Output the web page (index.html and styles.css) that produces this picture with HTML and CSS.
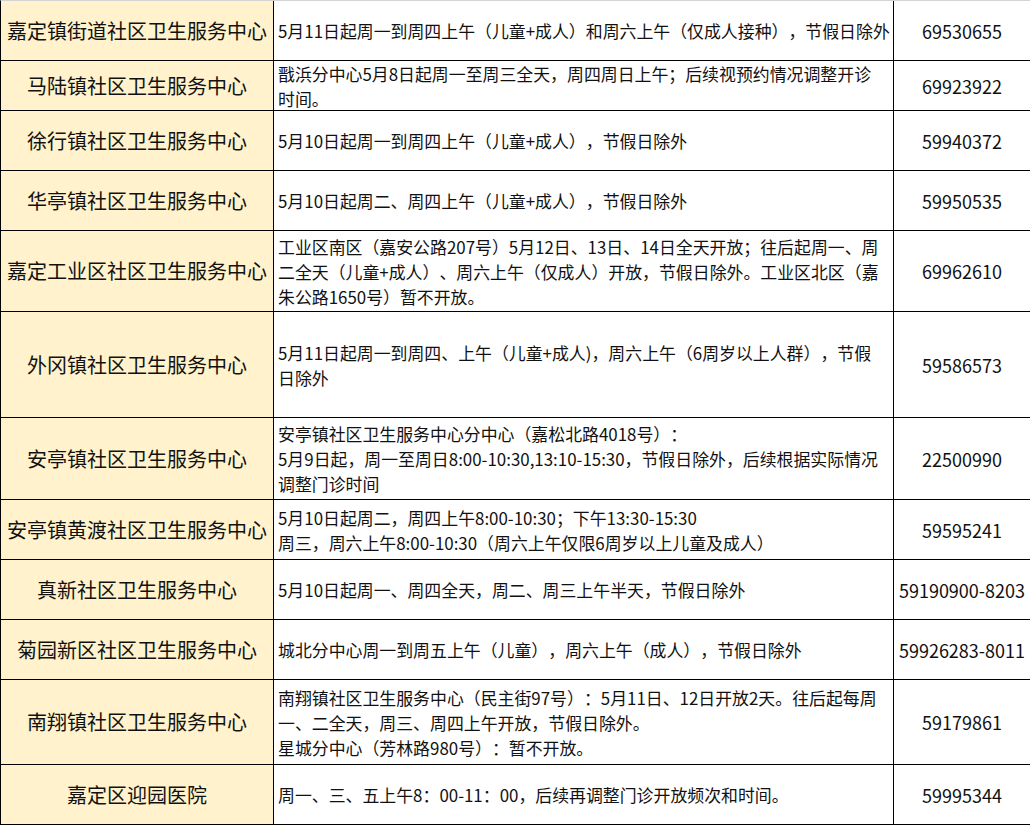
FILE: index.html
```html
<!DOCTYPE html>
<html lang="zh-CN">
<head>
<meta charset="utf-8">
<title>嘉定区社区卫生服务中心门诊安排</title>
<link rel="stylesheet" href="styles.css">
</head>
<body>
<div class="sheet">
  <div class="name">嘉定镇街道社区卫生服务中心</div>
  <div class="info">5月11日起周一到周四上午（儿童+成人）和周六上午（仅成人接种），节假日除外</div>
  <div class="tel">69530655</div>

  <div class="name">马陆镇社区卫生服务中心</div>
  <div class="info">戬浜分中心5月8日起周一至周三全天，周四周日上午；后续视预约情况调整开诊<br>时间。</div>
  <div class="tel">69923922</div>

  <div class="name">徐行镇社区卫生服务中心</div>
  <div class="info">5月10日起周一到周四上午（儿童+成人），节假日除外</div>
  <div class="tel">59940372</div>

  <div class="name">华亭镇社区卫生服务中心</div>
  <div class="info">5月10日起周二、周四上午（儿童+成人），节假日除外</div>
  <div class="tel">59950535</div>

  <div class="name">嘉定工业区社区卫生服务中心</div>
  <div class="info">工业区南区（嘉安公路207号）5月12日、13日、14日全天开放；往后起周一、周<br>二全天（儿童+成人）、周六上午（仅成人）开放，节假日除外。工业区北区（嘉<br>朱公路1650号）暂不开放。</div>
  <div class="tel">69962610</div>

  <div class="name">外冈镇社区卫生服务中心</div>
  <div class="info">5月11日起周一到周四、上午（儿童+成人)，周六上午（6周岁以上人群），节假<br>日除外</div>
  <div class="tel">59586573</div>

  <div class="name">安亭镇社区卫生服务中心</div>
  <div class="info">安亭镇社区卫生服务中心分中心（嘉松北路4018号）：<br>5月9日起，周一至周日8:00-10:30,13:10-15:30，节假日除外，后续根据实际情况<br>调整门诊时间</div>
  <div class="tel">22500990</div>

  <div class="name">安亭镇黄渡社区卫生服务中心</div>
  <div class="info">5月10日起周二，周四上午8:00-10:30；下午13:30-15:30<br>周三，周六上午8:00-10:30（周六上午仅限6周岁以上儿童及成人）</div>
  <div class="tel">59595241</div>

  <div class="name">真新社区卫生服务中心</div>
  <div class="info">5月10日起周一、周四全天，周二、周三上午半天，节假日除外</div>
  <div class="tel">59190900-8203</div>

  <div class="name">菊园新区社区卫生服务中心</div>
  <div class="info">城北分中心周一到周五上午（儿童），周六上午（成人），节假日除外</div>
  <div class="tel">59926283-8011</div>

  <div class="name">南翔镇社区卫生服务中心</div>
  <div class="info">南翔镇社区卫生服务中心（民主街97号）：5月11日、12日开放2天。往后起每周<br>一、二全天，周三、周四上午开放，节假日除外。<br>星城分中心（芳林路980号）：暂不开放。</div>
  <div class="tel">59179861</div>

  <div class="name">嘉定区迎园医院</div>
  <div class="info">周一、三、五上午8：00-11：00，后续再调整门诊开放频次和时间。</div>
  <div class="tel">59995344</div>
</div>
</body>
</html>
```
FILE: styles.css
```css
html, body {
  margin: 0;
  padding: 0;
  background: #ffffff;
}

body {
  width: 1030px;
  height: 825px;
  overflow: hidden;
  font-family: "Noto Sans CJK SC", "Noto Sans", sans-serif;
  color: #111111;
  text-spacing-trim: space-all;
}

.sheet {
  display: grid;
  grid-template-columns: 273px 620px 137px;
  grid-template-rows: 60px 50px 60px 60px 81px 106px 82px 60px 60px 60px 85px 60px;
  border-top: 1px solid #d4d4d4;
  border-left: 1px solid #000000;
  box-sizing: border-box;
  width: 1031px;
}

.sheet > div {
  box-sizing: border-box;
  border-right: 1px solid #000000;
  border-bottom: 1px solid #000000;
  display: flex;
  align-items: center;
}

.name {
  background: #fff2cc;
  justify-content: center;
  font-size: 20px;
  line-height: 26px;
  white-space: nowrap;
}

.info {
  padding-left: 4px;
  font-size: 16.9px;
  line-height: 25px;
  white-space: nowrap;
}

.tel {
  justify-content: center;
  font-size: 18px;
  line-height: 24px;
  white-space: nowrap;
}
```
